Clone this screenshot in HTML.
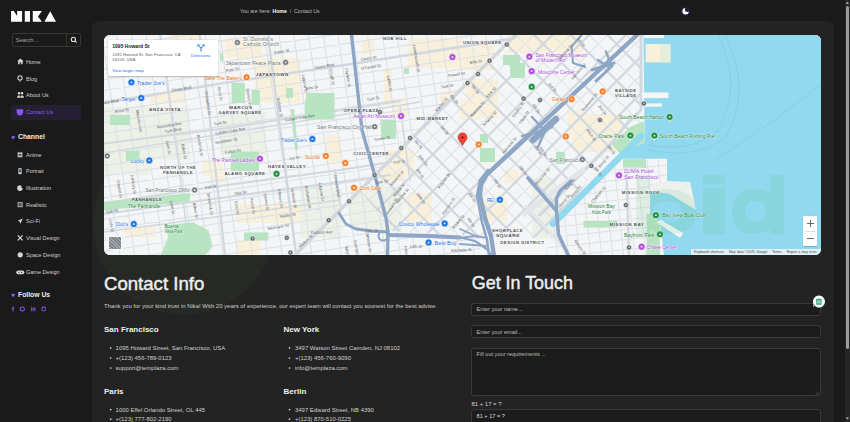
<!DOCTYPE html>
<html><head><meta charset="utf-8">
<style>
html,body{margin:0;padding:0;width:850px;height:422px;overflow:hidden;background:#1a1a1a;font-family:"Liberation Sans",sans-serif;}
.abs{position:absolute;}
#panel{position:absolute;left:92px;top:21px;width:742px;height:420px;background:#232323;border-radius:7px;}
#map{position:absolute;left:104px;top:35px;width:717px;height:220px;border-radius:6px;overflow:hidden;background:#f1f3f4;}
.nav{position:absolute;left:26px;font-size:5.5px;color:#cfcfcf;line-height:8px;}
.navi{position:absolute;left:17px;}
.h{position:absolute;color:#eee;font-weight:bold;}
.big{-webkit-text-stroke:0.45px #eee;}
.t{position:absolute;color:#cfcfcf;font-size:5.95px;white-space:nowrap;line-height:8px;}
.inp{position:absolute;left:471px;width:350px;background:#1c1c1c;border:0.6px solid #3a3a3a;border-radius:3px;box-sizing:border-box;}
.ph{position:absolute;left:4.6px;color:#bdbdbd;font-size:5.6px;white-space:nowrap;}
#sb{position:absolute;left:844.8px;top:0;width:5.2px;height:422px;background:#262626;}
</style></head><body>

<!-- logo -->
<svg class="abs" style="left:0;top:0" width="60" height="26" viewBox="0 0 60 26">
<path fill="#fff" d="M11.06 11.06H13.81L17.17 15.95V11.06H22.07V21.76H11.06Z M24.8 11.06H30V21.76H24.8Z M32.77 11.06H41.94L37.97 16.56L41.94 21.76H32.77Z M44.4 21.76L50.2 11.36L56 21.76Z"/>
</svg>

<!-- search -->
<div class="abs" style="left:11.5px;top:33.2px;width:69px;height:13.6px;border:0.7px solid #38382f;border-radius:2.5px;box-sizing:border-box;"></div>
<div class="abs" style="left:66.4px;top:33.5px;width:0.7px;height:13px;background:#38382f;"></div>
<div class="abs" style="left:15.8px;top:36.6px;font-size:5.6px;color:#a5a5a5;letter-spacing:-0.05px;">Search ...</div>
<svg class="abs" style="left:70px;top:36px" width="8" height="8" viewBox="0 0 8 8"><circle cx="3.4" cy="3.4" r="2.1" stroke="#ddd" stroke-width="1.1" fill="none"/><path d="M4.9 4.9L6.6 6.6" stroke="#ddd" stroke-width="1.2"/></svg>


<!-- nav -->
<div class="abs" style="left:11px;top:105px;width:70px;height:14.7px;background:#251f33;border-radius:3px;"></div>
<div class="nav" style="top:57.5px">Home</div>
<div class="nav" style="top:74.5px">Blog</div>
<div class="nav" style="top:91px">About Us</div>
<div class="nav" style="top:108px;color:#8b5cf6">Contact Us</div>

<div class="h" style="left:18px;top:133.4px;font-size:6.8px;">Channel</div>
<div class="nav" style="top:150.5px">Anime</div>
<div class="nav" style="top:167px">Portrait</div>
<div class="nav" style="top:184px">Illustration</div>
<div class="nav" style="top:200.5px">Realistic</div>
<div class="nav" style="top:217px">Sci-Fi</div>
<div class="nav" style="top:234px">Visual Design</div>
<div class="nav" style="top:250.5px">Space Design</div>
<div class="nav" style="top:268px">Game Design</div>
<div class="h" style="left:18px;top:291.1px;font-size:6.8px;">Follow Us</div>


<svg class="abs" style="left:0;top:0" width="90" height="330" viewBox="0 0 90 330">
<g fill="#d6d6d6">
<path d="M20.4 58.4L17.2 61.3H18.1V64.2H19.7V62.4H21.1V64.2H22.7V61.3H23.6Z"/>
<path d="M20 75.3A2.6 2.6 0 1 0 20 80.5A2.6 2.6 0 1 0 20 75.3ZM20 76.3A1.6 1.6 0 1 1 20 79.5A1.6 1.6 0 1 1 20 76.3ZM19.5 80.3H20.5V81.8H19.5Z"/>
<path d="M19 92A1.3 1.3 0 1 0 19 94.6A1.3 1.3 0 1 0 19 92ZM22 92A1.3 1.3 0 1 0 22 94.6A1.3 1.3 0 1 0 22 92ZM17 97.8Q17.2 95.2 19 95.2Q20.5 95.3 20.5 97.8ZM20.5 97.8Q20.6 95.3 22 95.2Q23.9 95.2 24 97.8Z"/>
<path d="M17.6 152.4H22.4V157.2H17.6ZM18.4 151.6L19.2 152.4H18.4ZM21.6 151.6L20.8 152.4H21.6Z" opacity="0.9"/>
<path d="M18.4 168.2H21.6V174.2H18.4Z"/><rect x="19.1" y="169.2" width="1.8" height="3.2" fill="#555"/>
<path d="M20 185.2A2.9 2.9 0 1 0 22.9 188.6Q21.5 188.3 21.2 187.3Q22.6 186.4 20 185.2Z"/>
<path d="M17.6 202.2H22.6V207.2H17.6Z" opacity="0.9"/>
<path d="M22.8 218.4L17.6 220.8L19.6 221.6L20.4 223.8Z"/>
<path d="M17.8 235.4L22.6 240.4M22.6 235.4L17.8 240.4" stroke="#d6d6d6" stroke-width="1.3"/>
<path d="M20.2 252.2A2.6 2.6 0 1 0 20.2 257.4A2.6 2.6 0 1 0 20.2 252.2Z"/>
<path d="M18.2 270.4H22.4A1.9 1.9 0 0 1 22.4 274.2H18.2A1.9 1.9 0 0 1 18.2 270.4Z"/>
</g>
<g fill="#262626"><circle cx="19" cy="272.3" r="0.6"/><circle cx="21.6" cy="272.3" r="0.6"/><rect x="18.6" y="154" width="2.8" height="1.6" fill="#444"/><rect x="18.4" y="203" width="3.4" height="3.4" fill="#555"/></g>
<g fill="#8b5cf6">
<path d="M16.6 109.2H23.2V113.2H22.2V115.2H17.6V113.2H16.6Z" opacity="0.95"/>
<path d="M11.6 135.8L15.3 136.6L13.4 139.2L11.8 138.2Z"/>
<path d="M11.6 293.6L15.3 294.3L13.4 296.9L11.8 296Z"/>
<path d="M12.3 306.4H14.2V307.3H13.4V308.2H14.1V309.1H13.4V311.6H12.5V309.1H11.9V308.2H12.5V307.4Q12.5 306.4 13.6 306.4Z"/>
<path d="M22.3 306.4A2.5 2.5 0 1 0 22.3 311.4A2.5 2.5 0 1 0 22.3 306.4ZM22.3 307.3A1.6 1.6 0 1 1 22.3 310.5A1.6 1.6 0 1 1 22.3 307.3Z"/>
<path d="M31.2 307.6H32.1V311.2H31.2ZM31.2 306.4H32.1V307.1H31.2ZM32.7 307.6H33.5V308.1Q34 307.5 34.6 307.5Q35.5 307.6 35.5 308.6V311.2H34.6V308.9Q34.6 308.3 34.1 308.3Q33.6 308.4 33.6 309V311.2H32.7Z"/>
<path d="M43.75 306.6A2.4 2.4 0 1 0 43.75 311.4A2.4 2.4 0 1 0 43.75 306.6ZM43.75 307.4A1.6 1.6 0 1 1 43.75 310.6A1.6 1.6 0 1 1 43.75 307.4Z"/>
</g>
</svg>
<!-- header -->
<div class="abs" style="left:240px;top:8px;font-size:5.2px;color:#bbb;white-space:nowrap;">You are here: <b style="color:#fff">Home</b> &nbsp;/&nbsp; Contact Us</div>
<svg class="abs" style="left:678px;top:4px" width="16" height="16" viewBox="0 0 16 16"><defs><mask id="mm"><rect width="16" height="16" fill="#fff"/><circle cx="9.4" cy="5.5" r="2.5" fill="#000"/></mask></defs><circle cx="7.5" cy="7" r="5.3" fill="#221b33"/><circle cx="7.6" cy="7.3" r="3.2" fill="#fff" mask="url(#mm)"/></svg>

<div id="panel"></div>
<div class="abs" style="left:93px;top:133px;width:182px;height:182px;border-radius:50%;background:rgba(120,150,60,0.05);"></div>
<div id="map"><svg id="mapsvg" width="717" height="220" viewBox="104 35 717 220" style="position:absolute;left:0;top:0" font-family="Liberation Sans, sans-serif"><defs><clipPath id="cw"><polygon points="104.0,35.0 515.0,35.0 360.0,190.0 392.0,231.0 480.0,236.0 480.0,255.0 104.0,255.0"/></clipPath><clipPath id="cs"><polygon points="515.0,35.0 641.0,35.0 641.0,125.0 612.0,150.0 551.0,229.0 545.0,238.0 480.0,236.0 392.0,231.0 360.0,190.0"/></clipPath><clipPath id="cm"><polygon points="553.0,229.0 622.0,160.0 667.0,160.0 667.0,182.0 650.0,186.0 650.0,214.0 660.0,222.0 664.0,255.0 545.0,255.0"/></clipPath></defs><rect x="104.0" y="35.0" width="717.0" height="220.0" rx="0" fill="#f4f5f6" /><rect x="104.0" y="107.0" width="86.0" height="53.0" rx="0" fill="#ecf0e6" /><rect x="220.0" y="112.0" width="46.0" height="43.0" rx="0" fill="#ecf0e6" /><rect x="300.0" y="188.0" width="42.0" height="50.0" rx="0" fill="#ecf0e6" /><rect x="350.0" y="186.0" width="52.0" height="44.0" rx="0" fill="#ecf0e6" /><rect x="532.0" y="178.0" width="24.0" height="60.0" rx="0" fill="#ecf0e6" /><rect x="104.0" y="160.0" width="46.0" height="15.0" rx="0" fill="#ecf0e6" /><rect x="225.0" y="38.0" width="37.0" height="20.0" rx="0" fill="#f9f0dc" /><rect x="255.0" y="58.0" width="45.0" height="45.0" rx="0" fill="#f9f0dc" /><rect x="408.0" y="38.0" width="54.0" height="30.0" rx="0" fill="#f9f0dc" /><rect x="440.0" y="92.0" width="12.0" height="10.0" rx="0" fill="#f9f0dc" /><rect x="460.0" y="45.0" width="34.0" height="25.0" rx="0" fill="#f9f0dc" /><rect x="466.0" y="79.0" width="32.0" height="39.0" rx="0" fill="#f9f0dc" /><rect x="508.0" y="35.0" width="74.0" height="18.0" rx="0" fill="#f9f0dc" /><rect x="362.0" y="40.0" width="12.0" height="14.0" rx="0" fill="#f9f0dc" /><rect x="384.0" y="68.0" width="8.0" height="37.0" rx="0" fill="#f9f0dc" /><rect x="392.0" y="100.0" width="16.0" height="17.0" rx="0" fill="#f9f0dc" /><rect x="386.0" y="150.0" width="28.0" height="26.0" rx="0" fill="#f9f0dc" /><rect x="460.0" y="100.0" width="20.0" height="20.0" rx="0" fill="#f9f0dc" /><rect x="568.0" y="110.0" width="14.0" height="27.0" rx="0" fill="#f9f0dc" /><rect x="572.0" y="114.0" width="50.0" height="38.0" rx="0" fill="#f9f0dc" /><rect x="203.0" y="160.0" width="19.0" height="16.0" rx="0" fill="#f9f0dc" /><rect x="326.0" y="135.0" width="15.0" height="28.0" rx="0" fill="#f9f0dc" /><rect x="210.0" y="170.0" width="15.0" height="13.0" rx="0" fill="#f9f0dc" /><rect x="124.0" y="226.0" width="31.0" height="11.0" rx="0" fill="#f9f0dc" /><rect x="236.0" y="204.0" width="65.0" height="19.0" rx="0" fill="#f9f0dc" /><rect x="236.0" y="240.0" width="24.0" height="15.0" rx="0" fill="#f9f0dc" /><rect x="408.0" y="193.0" width="24.0" height="29.0" rx="0" fill="#f9f0dc" /><rect x="384.0" y="164.0" width="20.0" height="18.0" rx="0" fill="#f9f0dc" /><rect x="372.0" y="170.0" width="33.0" height="9.0" rx="0" fill="#f9f0dc" /><rect x="484.0" y="198.0" width="23.0" height="23.0" rx="0" fill="#f9f0dc" /><rect x="504.0" y="170.0" width="15.0" height="13.0" rx="0" fill="#f9f0dc" /><rect x="150.0" y="93.0" width="35.0" height="10.0" rx="0" fill="#f9f0dc" /><rect x="170.0" y="35.0" width="30.0" height="10.0" rx="0" fill="#f9f0dc" /><g clip-path="url(#cw)"><path transform="rotate(-8.5 300 100)" d="M-120 -320.0H720M-120 -309.4H720M-120 -298.8H720M-120 -288.2H720M-120 -277.6H720M-120 -267.0H720M-120 -256.4H720M-120 -245.8H720M-120 -235.2H720M-120 -224.6H720M-120 -214.0H720M-120 -203.4H720M-120 -192.8H720M-120 -182.2H720M-120 -171.6H720M-120 -161.0H720M-120 -150.4H720M-120 -139.8H720M-120 -129.2H720M-120 -118.6H720M-120 -108.0H720M-120 -97.4H720M-120 -86.8H720M-120 -76.2H720M-120 -65.6H720M-120 -55.0H720M-120 -44.4H720M-120 -33.8H720M-120 -23.2H720M-120 -12.6H720M-120 -2.0H720M-120 8.6H720M-120 19.2H720M-120 29.8H720M-120 40.4H720M-120 51.0H720M-120 61.6H720M-120 72.2H720M-120 82.8H720M-120 93.4H720M-120 104.0H720M-120 114.6H720M-120 125.2H720M-120 135.8H720M-120 146.4H720M-120 157.0H720M-120 167.6H720M-120 178.2H720M-120 188.8H720M-120 199.4H720M-120 210.0H720M-120 220.6H720M-120 231.2H720M-120 241.8H720M-120 252.4H720M-120 263.0H720M-120 273.6H720M-120 284.2H720M-120 294.8H720M-120 305.4H720M-120 316.0H720M-120 326.6H720M-120 337.2H720M-120 347.8H720M-120 358.4H720M-120 369.0H720M-120 379.6H720M-120 390.2H720M-120 400.8H720M-120 411.4H720M-120 422.0H720M-120 432.6H720M-120 443.2H720M-120 453.8H720M-120 464.4H720M-120 475.0H720M-120 485.6H720M-120 496.2H720M-120 506.8H720M-120 517.4H720M-120.0 -320V520M-105.4 -320V520M-90.8 -320V520M-76.2 -320V520M-61.6 -320V520M-47.0 -320V520M-32.4 -320V520M-17.8 -320V520M-3.2 -320V520M11.4 -320V520M26.0 -320V520M40.6 -320V520M55.2 -320V520M69.8 -320V520M84.4 -320V520M99.0 -320V520M113.6 -320V520M128.2 -320V520M142.8 -320V520M157.4 -320V520M172.0 -320V520M186.6 -320V520M201.2 -320V520M215.8 -320V520M230.4 -320V520M245.0 -320V520M259.6 -320V520M274.2 -320V520M288.8 -320V520M303.4 -320V520M318.0 -320V520M332.6 -320V520M347.2 -320V520M361.8 -320V520M376.4 -320V520M391.0 -320V520M405.6 -320V520M420.2 -320V520M434.8 -320V520M449.4 -320V520M464.0 -320V520M478.6 -320V520M493.2 -320V520M507.8 -320V520M522.4 -320V520M537.0 -320V520M551.6 -320V520M566.2 -320V520M580.8 -320V520M595.4 -320V520M610.0 -320V520M624.6 -320V520M639.2 -320V520M653.8 -320V520M668.4 -320V520M683.0 -320V520M697.6 -320V520M712.2 -320V520" stroke="#dce1e6" stroke-width="1.1" fill="none"/></g><g clip-path="url(#cs)"><path transform="rotate(-45 467.5 83)" d="M47.5 -333.0H887.5M47.5 -320.0H887.5M47.5 -307.0H887.5M47.5 -294.0H887.5M47.5 -281.0H887.5M47.5 -268.0H887.5M47.5 -255.0H887.5M47.5 -242.0H887.5M47.5 -229.0H887.5M47.5 -216.0H887.5M47.5 -203.0H887.5M47.5 -190.0H887.5M47.5 -177.0H887.5M47.5 -164.0H887.5M47.5 -151.0H887.5M47.5 -138.0H887.5M47.5 -125.0H887.5M47.5 -112.0H887.5M47.5 -99.0H887.5M47.5 -86.0H887.5M47.5 -73.0H887.5M47.5 -60.0H887.5M47.5 -47.0H887.5M47.5 -34.0H887.5M47.5 -21.0H887.5M47.5 -8.0H887.5M47.5 5.0H887.5M47.5 18.0H887.5M47.5 31.0H887.5M47.5 44.0H887.5M47.5 57.0H887.5M47.5 70.0H887.5M47.5 83.0H887.5M47.5 96.0H887.5M47.5 109.0H887.5M47.5 122.0H887.5M47.5 135.0H887.5M47.5 148.0H887.5M47.5 161.0H887.5M47.5 174.0H887.5M47.5 187.0H887.5M47.5 200.0H887.5M47.5 213.0H887.5M47.5 226.0H887.5M47.5 239.0H887.5M47.5 252.0H887.5M47.5 265.0H887.5M47.5 278.0H887.5M47.5 291.0H887.5M47.5 304.0H887.5M47.5 317.0H887.5M47.5 330.0H887.5M47.5 343.0H887.5M47.5 356.0H887.5M47.5 369.0H887.5M47.5 382.0H887.5M47.5 395.0H887.5M47.5 408.0H887.5M47.5 421.0H887.5M47.5 434.0H887.5M47.5 447.0H887.5M47.5 460.0H887.5M47.5 473.0H887.5M47.5 486.0H887.5M47.5 499.0H887.5M54.5 -337V503M67.5 -337V503M80.5 -337V503M93.5 -337V503M106.5 -337V503M119.5 -337V503M132.5 -337V503M145.5 -337V503M158.5 -337V503M171.5 -337V503M184.5 -337V503M197.5 -337V503M210.5 -337V503M223.5 -337V503M236.5 -337V503M249.5 -337V503M262.5 -337V503M275.5 -337V503M288.5 -337V503M301.5 -337V503M314.5 -337V503M327.5 -337V503M340.5 -337V503M353.5 -337V503M366.5 -337V503M379.5 -337V503M392.5 -337V503M405.5 -337V503M418.5 -337V503M431.5 -337V503M444.5 -337V503M457.5 -337V503M470.5 -337V503M483.5 -337V503M496.5 -337V503M509.5 -337V503M522.5 -337V503M535.5 -337V503M548.5 -337V503M561.5 -337V503M574.5 -337V503M587.5 -337V503M600.5 -337V503M613.5 -337V503M626.5 -337V503M639.5 -337V503M652.5 -337V503M665.5 -337V503M678.5 -337V503M691.5 -337V503M704.5 -337V503M717.5 -337V503M730.5 -337V503M743.5 -337V503M756.5 -337V503M769.5 -337V503M782.5 -337V503M795.5 -337V503M808.5 -337V503M821.5 -337V503M834.5 -337V503M847.5 -337V503M860.5 -337V503M873.5 -337V503M886.5 -337V503" stroke="#dce1e6" stroke-width="1.0" fill="none"/></g><g clip-path="url(#cs)"><path transform="rotate(-45 467.5 83)" d="M47.5 -333.0H887.5M47.5 -307.0H887.5M47.5 -281.0H887.5M47.5 -255.0H887.5M47.5 -229.0H887.5M47.5 -203.0H887.5M47.5 -177.0H887.5M47.5 -151.0H887.5M47.5 -125.0H887.5M47.5 -99.0H887.5M47.5 -73.0H887.5M47.5 -47.0H887.5M47.5 -21.0H887.5M47.5 5.0H887.5M47.5 31.0H887.5M47.5 57.0H887.5M47.5 83.0H887.5M47.5 109.0H887.5M47.5 135.0H887.5M47.5 161.0H887.5M47.5 187.0H887.5M47.5 213.0H887.5M47.5 239.0H887.5M47.5 265.0H887.5M47.5 291.0H887.5M47.5 317.0H887.5M47.5 343.0H887.5M47.5 369.0H887.5M47.5 395.0H887.5M47.5 421.0H887.5M47.5 447.0H887.5M47.5 473.0H887.5M47.5 499.0H887.5M54.5 -337V503M80.5 -337V503M106.5 -337V503M132.5 -337V503M158.5 -337V503M184.5 -337V503M210.5 -337V503M236.5 -337V503M262.5 -337V503M288.5 -337V503M314.5 -337V503M340.5 -337V503M366.5 -337V503M392.5 -337V503M418.5 -337V503M444.5 -337V503M470.5 -337V503M496.5 -337V503M522.5 -337V503M548.5 -337V503M574.5 -337V503M600.5 -337V503M626.5 -337V503M652.5 -337V503M678.5 -337V503M704.5 -337V503M730.5 -337V503M756.5 -337V503M782.5 -337V503M808.5 -337V503M834.5 -337V503M860.5 -337V503M886.5 -337V503" stroke="#d2d8df" stroke-width="2.2" fill="none"/></g><g clip-path="url(#cm)"><path transform="rotate(-6 620 200)" d="M200 -220.0H1040M200 -210.0H1040M200 -200.0H1040M200 -190.0H1040M200 -180.0H1040M200 -170.0H1040M200 -160.0H1040M200 -150.0H1040M200 -140.0H1040M200 -130.0H1040M200 -120.0H1040M200 -110.0H1040M200 -100.0H1040M200 -90.0H1040M200 -80.0H1040M200 -70.0H1040M200 -60.0H1040M200 -50.0H1040M200 -40.0H1040M200 -30.0H1040M200 -20.0H1040M200 -10.0H1040M200 0.0H1040M200 10.0H1040M200 20.0H1040M200 30.0H1040M200 40.0H1040M200 50.0H1040M200 60.0H1040M200 70.0H1040M200 80.0H1040M200 90.0H1040M200 100.0H1040M200 110.0H1040M200 120.0H1040M200 130.0H1040M200 140.0H1040M200 150.0H1040M200 160.0H1040M200 170.0H1040M200 180.0H1040M200 190.0H1040M200 200.0H1040M200 210.0H1040M200 220.0H1040M200 230.0H1040M200 240.0H1040M200 250.0H1040M200 260.0H1040M200 270.0H1040M200 280.0H1040M200 290.0H1040M200 300.0H1040M200 310.0H1040M200 320.0H1040M200 330.0H1040M200 340.0H1040M200 350.0H1040M200 360.0H1040M200 370.0H1040M200 380.0H1040M200 390.0H1040M200 400.0H1040M200 410.0H1040M200 420.0H1040M200 430.0H1040M200 440.0H1040M200 450.0H1040M200 460.0H1040M200 470.0H1040M200 480.0H1040M200 490.0H1040M200 500.0H1040M200 510.0H1040M200 520.0H1040M200 530.0H1040M200 540.0H1040M200 550.0H1040M200 560.0H1040M200 570.0H1040M200 580.0H1040M200 590.0H1040M200 600.0H1040M200 610.0H1040M200 620.0H1040M200.0 -220V620M211.0 -220V620M222.0 -220V620M233.0 -220V620M244.0 -220V620M255.0 -220V620M266.0 -220V620M277.0 -220V620M288.0 -220V620M299.0 -220V620M310.0 -220V620M321.0 -220V620M332.0 -220V620M343.0 -220V620M354.0 -220V620M365.0 -220V620M376.0 -220V620M387.0 -220V620M398.0 -220V620M409.0 -220V620M420.0 -220V620M431.0 -220V620M442.0 -220V620M453.0 -220V620M464.0 -220V620M475.0 -220V620M486.0 -220V620M497.0 -220V620M508.0 -220V620M519.0 -220V620M530.0 -220V620M541.0 -220V620M552.0 -220V620M563.0 -220V620M574.0 -220V620M585.0 -220V620M596.0 -220V620M607.0 -220V620M618.0 -220V620M629.0 -220V620M640.0 -220V620M651.0 -220V620M662.0 -220V620M673.0 -220V620M684.0 -220V620M695.0 -220V620M706.0 -220V620M717.0 -220V620M728.0 -220V620M739.0 -220V620M750.0 -220V620M761.0 -220V620M772.0 -220V620M783.0 -220V620M794.0 -220V620M805.0 -220V620M816.0 -220V620M827.0 -220V620M838.0 -220V620M849.0 -220V620M860.0 -220V620M871.0 -220V620M882.0 -220V620M893.0 -220V620M904.0 -220V620M915.0 -220V620M926.0 -220V620M937.0 -220V620M948.0 -220V620M959.0 -220V620M970.0 -220V620M981.0 -220V620M992.0 -220V620M1003.0 -220V620M1014.0 -220V620M1025.0 -220V620M1036.0 -220V620" stroke="#dce1e6" stroke-width="1.0" fill="none"/></g><path d="M104.0 103.0 L224.0 83.0 L345.0 65.0 L515.0 38.0" fill="none" stroke="#d2d8df" stroke-width="2.6" stroke-linejoin="round" stroke-linecap="round" /><path d="M104.0 143.5 L224.0 128.4 L400.0 101.0" fill="none" stroke="#d2d8df" stroke-width="2.0" stroke-linejoin="round" stroke-linecap="round" /><path d="M104.0 153.0 L303.0 121.0 L420.0 102.0" fill="none" stroke="#d2d8df" stroke-width="1.6" stroke-linejoin="round" stroke-linecap="round" /><path d="M104.0 203.0 L220.0 186.0 L340.0 170.0 L392.0 162.0" fill="none" stroke="#d2d8df" stroke-width="2.2" stroke-linejoin="round" stroke-linecap="round" /><path d="M104.0 214.0 L220.0 198.0 L340.0 182.0 L390.0 175.0" fill="none" stroke="#d2d8df" stroke-width="2.2" stroke-linejoin="round" stroke-linecap="round" /><path d="M200.0 35.0 L211.0 130.0 L225.0 255.0" fill="none" stroke="#d2d8df" stroke-width="2.2" stroke-linejoin="round" stroke-linecap="round" /><path d="M268.0 35.0 L286.0 175.0 L296.0 255.0" fill="none" stroke="#d2d8df" stroke-width="2.4" stroke-linejoin="round" stroke-linecap="round" /><path d="M335.0 170.0 L340.0 205.0" fill="none" stroke="#d2d8df" stroke-width="2.0" stroke-linejoin="round" stroke-linecap="round" /><path d="M641.0 35.0 L641.0 110.0 L629.0 121.0 L611.0 144.0 L593.0 162.0 L575.0 180.0 L540.0 215.0" fill="none" stroke="#d2d8df" stroke-width="3.0" stroke-linejoin="round" stroke-linecap="round" /><path d="M626.0 160.0 L629.0 255.0" fill="none" stroke="#d2d8df" stroke-width="2.4" stroke-linejoin="round" stroke-linecap="round" /><path d="M104.0 232.0 L230.0 215.0 L340.0 200.0" fill="none" stroke="#d2d8df" stroke-width="1.6" stroke-linejoin="round" stroke-linecap="round" /><path d="M160.0 35.0 L178.0 160.0 L190.0 255.0" fill="none" stroke="#d2d8df" stroke-width="1.6" stroke-linejoin="round" stroke-linecap="round" /><path d="M400.0 106.0 L410.0 180.0" fill="none" stroke="#d2d8df" stroke-width="1.6" stroke-linejoin="round" stroke-linecap="round" /><path d="M515.5 35.0 L295.0 255.0" fill="none" stroke="#d3d8de" stroke-width="3.4" stroke-linejoin="round" stroke-linecap="round" /><path d="M524.0 214.0 L583.0 170.0" fill="none" stroke="#e2e5e9" stroke-width="5" stroke-linejoin="round" stroke-linecap="round" /><path d="M526.0 206.0 L567.0 251.0" fill="none" stroke="#e2e5e9" stroke-width="3" stroke-linejoin="round" stroke-linecap="round" /><rect x="126.0" y="150.7" width="13.5" height="10.6" rx="0" fill="#b9e4c2" /><rect x="230.7" y="151.5" width="28.3" height="19.5" rx="0" fill="#b9e4c2" /><rect x="305.0" y="100.0" width="29.0" height="19.6" rx="0" fill="#b9e4c2" /><rect x="231.6" y="83.0" width="13.3" height="20.0" rx="0" fill="#b9e4c2" /><rect x="251.5" y="90.0" width="8.3" height="15.0" rx="0" fill="#b9e4c2" /><rect x="286.0" y="88.0" width="7.0" height="10.0" rx="0" fill="#b9e4c2" /><rect x="306.0" y="93.0" width="28.5" height="12.0" rx="0" fill="#b9e4c2" /><rect x="381.0" y="119.6" width="15.0" height="19.4" rx="0" fill="#b9e4c2" /><rect x="503.0" y="55.0" width="17.0" height="10.0" rx="0" fill="#b9e4c2" /><rect x="510.0" y="63.0" width="15.0" height="15.0" rx="0" fill="#b9e4c2" /><rect x="480.0" y="134.0" width="8.0" height="9.0" rx="0" fill="#b9e4c2" /><rect x="480.0" y="148.0" width="15.0" height="14.0" rx="0" fill="#b9e4c2" /><rect x="556.0" y="152.0" width="9.0" height="12.0" rx="0" fill="#b9e4c2" /><rect x="583.5" y="220.8" width="33.8" height="6.8" rx="0" fill="#b9e4c2" /><rect x="646.6" y="214.0" width="13.4" height="41.0" rx="0" fill="#b9e4c2" /><rect x="244.0" y="232.4" width="24.3" height="8.1" rx="0" fill="#b9e4c2" /><rect x="220.0" y="53.0" width="3.0" height="8.0" rx="0" fill="#b9e4c2" /><rect x="404.0" y="68.0" width="5.0" height="6.0" rx="0" fill="#b9e4c2" /><rect x="110.0" y="115.0" width="20.0" height="10.0" rx="0" fill="#b9e4c2" /><polygon points="104.0,202.0 190.0,193.0 190.0,201.5 104.0,210.5" fill="#b9e4c2" /><polygon points="164.4,225.4 192.6,222.3 208.7,230.4 212.7,246.5 204.7,256.0 160.4,256.0 168.4,236.4" fill="#b9e4c2" /><polygon points="291.0,109.0 294.0,109.0 298.0,150.0 295.0,150.0" fill="#b9e4c2" /><polygon points="611.8,144.4 630.4,126.7 643.8,121.3 644.7,142.7 619.8,153.3" fill="#b9e4c2" /><rect x="623.0" y="158.7" width="23.0" height="8.8" rx="0" fill="#b9e4c2" /><polygon points="643.5,35.0 821.0,35.0 821.0,255.0 664.0,255.0 660.0,222.0 650.0,214.0 650.0,185.0 667.0,182.0 667.0,158.7 623.0,158.7 619.8,153.3 644.7,142.7" fill="#90d9ee" /><path d="M641.0 136.0 L553.0 224.0" fill="none" stroke="#90d9ee" stroke-width="6.4" stroke-linejoin="round" stroke-linecap="round" stroke-linecap="butt"/><path d="M725 35 Q752 90 726 136 Q700 160 648 150" fill="none" stroke="#6fbcd6" stroke-width="0.5" stroke-linejoin="round" stroke-linecap="round" stroke-dasharray="1 1" opacity="0.7"/><path d="M718 35 Q744 90 716 133 Q690 152 648 145" fill="none" stroke="#6fbcd6" stroke-width="0.5" stroke-linejoin="round" stroke-linecap="round" stroke-dasharray="1 1" opacity="0.7"/><path d="M821 84 Q770 125 715 160" fill="none" stroke="#6fbcd6" stroke-width="0.5" stroke-linejoin="round" stroke-linecap="round" stroke-dasharray="1 1" opacity="0.7"/><rect x="644.0" y="35.0" width="20.0" height="3.0" rx="0" fill="#f4f5f6" /><rect x="645.6" y="44.0" width="24.8" height="18.4" rx="0" fill="#f9f0dc" /><rect x="660.0" y="44.0" width="10.4" height="18.4" rx="0" fill="#e3efdc" /><rect x="641.7" y="92.4" width="26.7" height="5.7" rx="0" fill="#f4f5f6" /><rect x="643.0" y="103.4" width="18.8" height="3.3" rx="0" fill="#f4f5f6" /><polygon points="650.0,185.0 667.0,181.0 690.0,182.0 696.0,210.0 670.0,194.0 650.0,191.0" fill="#eef0ee" /><polygon points="656.0,222.0 661.0,220.0 683.0,233.0 680.0,238.0" fill="#f4f5f6" /><path d="M351.5 35.0 L362.0 130.0 L374.7 175.0 L386.0 218.0 L388.0 232.0 L387.5 256.0" fill="none" stroke="#8ea6c6" stroke-width="3.4" stroke-linejoin="round" stroke-linecap="round" /><path d="M637.0 35.0 L561.6 105.0 L486.7 174.7 L481.0 185.0 L480.0 196.0 L485.0 218.0 L491.0 236.0 L494.0 256.0" fill="none" stroke="#8ea6c6" stroke-width="4.4" stroke-linejoin="round" stroke-linecap="round" /><path d="M488.0 170.0 L480.0 180.0 L477.0 196.0 L482.0 222.0 L487.0 240.0 L489.0 256.0" fill="none" stroke="#8ea6c6" stroke-width="2.6" stroke-linejoin="round" stroke-linecap="round" /><path d="M339.0 213.0 L346.0 224.0 L356.0 229.0 L372.0 231.0 L388.0 232.0" fill="none" stroke="#8ea6c6" stroke-width="2.8" stroke-linejoin="round" stroke-linecap="round" /><path d="M388.0 235.0 L430.0 236.0 L460.0 237.5" fill="none" stroke="#8ea6c6" stroke-width="3.8" stroke-linejoin="round" stroke-linecap="round" /><path d="M458.0 237.0 L475.0 241.0 L488.0 250.0 L492.0 256.0" fill="none" stroke="#8ea6c6" stroke-width="2.2" stroke-linejoin="round" stroke-linecap="round" /><path d="M458.0 238.0 L476.0 236.0 L487.0 238.0" fill="none" stroke="#8ea6c6" stroke-width="2.2" stroke-linejoin="round" stroke-linecap="round" /><path d="M460.0 229.0 L478.0 237.0" fill="none" stroke="#8ea6c6" stroke-width="1.8" stroke-linejoin="round" stroke-linecap="round" /><path d="M460.0 244.0 L486.0 246.0" fill="none" stroke="#8ea6c6" stroke-width="1.8" stroke-linejoin="round" stroke-linecap="round" /><path d="M528.0 178.0 L550.5 204.0 L556.5 211.0 L558.5 234.5 L568.6 256.0" fill="none" stroke="#8ea6c6" stroke-width="3.6" stroke-linejoin="round" stroke-linecap="round" /><path d="M571.0 181.0 L560.0 191.0 L556.5 198.0 L556.5 211.0" fill="none" stroke="#8ea6c6" stroke-width="3.4" stroke-linejoin="round" stroke-linecap="round" /><path d="M522.0 136.0 L538.0 132.0 L552.0 127.0" fill="none" stroke="#8ea6c6" stroke-width="2.4" stroke-linejoin="round" stroke-linecap="round" /><path d="M532.0 117.0 L542.0 128.0" fill="none" stroke="#8ea6c6" stroke-width="2.4" stroke-linejoin="round" stroke-linecap="round" /><path d="M545.0 131.0 L538.0 147.0" fill="none" stroke="#8ea6c6" stroke-width="2.4" stroke-linejoin="round" stroke-linecap="round" /><path d="M581.5 35.0 L571.5 46.6 L573.0 63.0 L585.0 67.0" fill="none" stroke="#8ea6c6" stroke-width="2.2" stroke-linejoin="round" stroke-linecap="round" /><path d="M606.0 51.6 L611.0 65.0" fill="none" stroke="#8ea6c6" stroke-width="2.4" stroke-linejoin="round" stroke-linecap="round" /><path d="M598.0 60.0 L609.7 68.0" fill="none" stroke="#8ea6c6" stroke-width="2.4" stroke-linejoin="round" stroke-linecap="round" /><path d="M592.0 70.0 L614.0 63.0" fill="none" stroke="#8ea6c6" stroke-width="3.0" stroke-linejoin="round" stroke-linecap="round" /><path d="M596.0 81.0 L612.0 66.0" fill="none" stroke="#8ea6c6" stroke-width="3.0" stroke-linejoin="round" stroke-linecap="round" /><path d="M533.0 140.0 L556.0 119.0" fill="none" stroke="#8ea6c6" stroke-width="6.5" stroke-linejoin="round" stroke-linecap="round" /><circle cx="383" cy="236" r="4.5" fill="none" stroke="#8ea6c6" stroke-width="2"/><text x="149" y="110.5" font-size="4.1" fill="#4d5257" font-weight="bold" letter-spacing="0.45" text-anchor="start" stroke="#fff" stroke-width="0.6" stroke-opacity="0.8" paint-order="stroke" textLength="32" lengthAdjust="spacingAndGlyphs">ANZA VISTA</text><text x="229" y="108.5" font-size="4.1" fill="#4d5257" font-weight="bold" letter-spacing="0.45" text-anchor="start" stroke="#fff" stroke-width="0.6" stroke-opacity="0.8" paint-order="stroke" textLength="23.5" lengthAdjust="spacingAndGlyphs">MARCUS</text><text x="218.6" y="114" font-size="4.1" fill="#4d5257" font-weight="bold" letter-spacing="0.45" text-anchor="start" stroke="#fff" stroke-width="0.6" stroke-opacity="0.8" paint-order="stroke" textLength="43" lengthAdjust="spacingAndGlyphs">GARVEY SQUARE</text><text x="255.7" y="76" font-size="4.1" fill="#4d5257" font-weight="bold" letter-spacing="0.45" text-anchor="start" stroke="#fff" stroke-width="0.6" stroke-opacity="0.8" paint-order="stroke" textLength="33" lengthAdjust="spacingAndGlyphs">JAPANTOWN</text><text x="383" y="39.6" font-size="4.1" fill="#4d5257" font-weight="bold" letter-spacing="0.45" text-anchor="start" stroke="#fff" stroke-width="0.6" stroke-opacity="0.8" paint-order="stroke" textLength="24" lengthAdjust="spacingAndGlyphs">NOB HILL</text><text x="463" y="44.2" font-size="4.1" fill="#4d5257" font-weight="bold" letter-spacing="0.45" text-anchor="start" stroke="#fff" stroke-width="0.6" stroke-opacity="0.8" paint-order="stroke" textLength="38.5" lengthAdjust="spacingAndGlyphs">UNION SQUARE</text><text x="343.6" y="111.5" font-size="4.1" fill="#4d5257" font-weight="bold" letter-spacing="0.45" text-anchor="start" stroke="#fff" stroke-width="0.6" stroke-opacity="0.8" paint-order="stroke" textLength="35.4" lengthAdjust="spacingAndGlyphs">OPERA PLAZA</text><text x="416.4" y="120.4" font-size="4.1" fill="#4d5257" font-weight="bold" letter-spacing="0.45" text-anchor="start" stroke="#fff" stroke-width="0.6" stroke-opacity="0.8" paint-order="stroke" textLength="32" lengthAdjust="spacingAndGlyphs">MID-MARKET</text><text x="353.3" y="154.5" font-size="4.1" fill="#4d5257" font-weight="bold" letter-spacing="0.45" text-anchor="start" stroke="#fff" stroke-width="0.6" stroke-opacity="0.8" paint-order="stroke" textLength="35.7" lengthAdjust="spacingAndGlyphs">CIVIC CENTER</text><text x="160" y="169" font-size="4.1" fill="#4d5257" font-weight="bold" letter-spacing="0.45" text-anchor="start" stroke="#fff" stroke-width="0.6" stroke-opacity="0.8" paint-order="stroke" textLength="36" lengthAdjust="spacingAndGlyphs">NORTH OF THE</text><text x="163" y="174" font-size="4.1" fill="#4d5257" font-weight="bold" letter-spacing="0.45" text-anchor="start" stroke="#fff" stroke-width="0.6" stroke-opacity="0.8" paint-order="stroke" textLength="30" lengthAdjust="spacingAndGlyphs">PANHANDLE</text><text x="132" y="201" font-size="4.1" fill="#4d5257" font-weight="bold" letter-spacing="0.45" text-anchor="start" stroke="#fff" stroke-width="0.6" stroke-opacity="0.8" paint-order="stroke" textLength="30.4" lengthAdjust="spacingAndGlyphs">PANHANDLE</text><text x="268" y="168.4" font-size="4.1" fill="#4d5257" font-weight="bold" letter-spacing="0.45" text-anchor="start" stroke="#fff" stroke-width="0.6" stroke-opacity="0.8" paint-order="stroke" textLength="38" lengthAdjust="spacingAndGlyphs">HAYES VALLEY</text><text x="224.4" y="174.7" font-size="4.1" fill="#4d5257" font-weight="bold" letter-spacing="0.45" text-anchor="start" stroke="#fff" stroke-width="0.6" stroke-opacity="0.8" paint-order="stroke" textLength="41" lengthAdjust="spacingAndGlyphs">ALAMO SQUARE</text><text x="492" y="231.7" font-size="4.1" fill="#4d5257" font-weight="bold" letter-spacing="0.45" text-anchor="start" stroke="#fff" stroke-width="0.6" stroke-opacity="0.8" paint-order="stroke" textLength="31" lengthAdjust="spacingAndGlyphs">SHOWPLACE</text><text x="496" y="236.5" font-size="4.1" fill="#4d5257" font-weight="bold" letter-spacing="0.45" text-anchor="start" stroke="#fff" stroke-width="0.6" stroke-opacity="0.8" paint-order="stroke" textLength="24" lengthAdjust="spacingAndGlyphs">SQUARE</text><text x="500.3" y="243.6" font-size="4.1" fill="#4d5257" font-weight="bold" letter-spacing="0.45" text-anchor="start" stroke="#fff" stroke-width="0.6" stroke-opacity="0.8" paint-order="stroke" textLength="44.3" lengthAdjust="spacingAndGlyphs">DESIGN DISTRICT</text><text x="615" y="91.5" font-size="4.1" fill="#4d5257" font-weight="bold" letter-spacing="0.45" text-anchor="start" stroke="#fff" stroke-width="0.6" stroke-opacity="0.8" paint-order="stroke" textLength="21.6" lengthAdjust="spacingAndGlyphs">BAYSIDE</text><text x="615" y="96.5" font-size="4.1" fill="#4d5257" font-weight="bold" letter-spacing="0.45" text-anchor="start" stroke="#fff" stroke-width="0.6" stroke-opacity="0.8" paint-order="stroke" textLength="21.6" lengthAdjust="spacingAndGlyphs">VILLAGE</text><text x="621.8" y="194" font-size="4.1" fill="#4d5257" font-weight="bold" letter-spacing="0.45" text-anchor="start" stroke="#fff" stroke-width="0.6" stroke-opacity="0.8" paint-order="stroke" textLength="38.2" lengthAdjust="spacingAndGlyphs">MISSION ROCK</text><text x="609.4" y="226" font-size="4.1" fill="#4d5257" font-weight="bold" letter-spacing="0.45" text-anchor="start" stroke="#fff" stroke-width="0.6" stroke-opacity="0.8" paint-order="stroke" textLength="35" lengthAdjust="spacingAndGlyphs">MISSION BAY</text><text x="243" y="41.2" font-size="4.5" fill="#70757a" font-weight="normal" letter-spacing="0" text-anchor="start" stroke="#fff" stroke-width="0.6" stroke-opacity="0.8" paint-order="stroke" textLength="30" lengthAdjust="spacingAndGlyphs">St. Dominic's</text><text x="243" y="46.4" font-size="4.5" fill="#70757a" font-weight="normal" letter-spacing="0" text-anchor="start" stroke="#fff" stroke-width="0.6" stroke-opacity="0.8" paint-order="stroke" textLength="36" lengthAdjust="spacingAndGlyphs">Catholic Church</text><text x="225.8" y="64.5" font-size="4.5" fill="#70757a" font-weight="normal" letter-spacing="0" text-anchor="start" stroke="#fff" stroke-width="0.6" stroke-opacity="0.8" paint-order="stroke" textLength="54.8" lengthAdjust="spacingAndGlyphs">Japantown Peace Plaza</text><text x="204.7" y="80.2" font-size="4.5" fill="#e8710a" font-weight="normal" letter-spacing="0" text-anchor="start" stroke="#fff" stroke-width="0.6" stroke-opacity="0.8" paint-order="stroke" textLength="37" lengthAdjust="spacingAndGlyphs">Jane The Bakery</text><text x="137" y="84.5" font-size="4.5" fill="#1a73e8" font-weight="normal" letter-spacing="0" text-anchor="start" stroke="#fff" stroke-width="0.6" stroke-opacity="0.8" paint-order="stroke" textLength="27.7" lengthAdjust="spacingAndGlyphs">Trader Joe's</text><text x="121.6" y="100.8" font-size="4.5" fill="#1a73e8" font-weight="normal" letter-spacing="0" text-anchor="start" stroke="#fff" stroke-width="0.6" stroke-opacity="0.8" paint-order="stroke" textLength="13.8" lengthAdjust="spacingAndGlyphs">Target</text><text x="130.7" y="162.8" font-size="4.5" fill="#1a73e8" font-weight="normal" letter-spacing="0" text-anchor="start" stroke="#fff" stroke-width="0.6" stroke-opacity="0.8" paint-order="stroke" textLength="13.3" lengthAdjust="spacingAndGlyphs">Lucky</text><text x="211.7" y="161.5" font-size="4.5" fill="#a94ad6" font-weight="normal" letter-spacing="0" text-anchor="start" stroke="#fff" stroke-width="0.6" stroke-opacity="0.8" paint-order="stroke" textLength="42.8" lengthAdjust="spacingAndGlyphs">The Painted Ladies</text><text x="280.4" y="141.5" font-size="4.5" fill="#1a73e8" font-weight="normal" letter-spacing="0" text-anchor="start" stroke="#fff" stroke-width="0.6" stroke-opacity="0.8" paint-order="stroke" textLength="26.6" lengthAdjust="spacingAndGlyphs">Trader Joe's</text><text x="305" y="158.5" font-size="4.5" fill="#e8710a" font-weight="normal" letter-spacing="0" text-anchor="start" stroke="#fff" stroke-width="0.6" stroke-opacity="0.8" paint-order="stroke" textLength="14.6" lengthAdjust="spacingAndGlyphs">Souvla</text><text x="317" y="128.5" font-size="4.5" fill="#70757a" font-weight="normal" letter-spacing="0" text-anchor="start" stroke="#fff" stroke-width="0.6" stroke-opacity="0.8" paint-order="stroke" textLength="55" lengthAdjust="spacingAndGlyphs">San Francisco City Hall</text><text x="353.3" y="117.9" font-size="4.5" fill="#a94ad6" font-weight="normal" letter-spacing="0" text-anchor="start" stroke="#fff" stroke-width="0.6" stroke-opacity="0.8" paint-order="stroke" textLength="41.7" lengthAdjust="spacingAndGlyphs">Asian Art Museum</text><text x="360" y="190" font-size="4.5" fill="#e8710a" font-weight="normal" letter-spacing="0" text-anchor="start" stroke="#fff" stroke-width="0.6" stroke-opacity="0.8" paint-order="stroke" textLength="21" lengthAdjust="spacingAndGlyphs">Zuni Cafe</text><text x="145.3" y="192.2" font-size="4.5" fill="#70757a" font-weight="normal" letter-spacing="0" text-anchor="start" stroke="#fff" stroke-width="0.6" stroke-opacity="0.8" paint-order="stroke" textLength="44.3" lengthAdjust="spacingAndGlyphs">San Francisco DMV</text><text x="116" y="225.9" font-size="4.5" fill="#1a73e8" font-weight="normal" letter-spacing="0" text-anchor="start" stroke="#fff" stroke-width="0.6" stroke-opacity="0.8" paint-order="stroke" textLength="12.2" lengthAdjust="spacingAndGlyphs">Dot's</text><text x="164.4" y="227.5" font-size="4.5" fill="#188038" font-weight="normal" letter-spacing="0" text-anchor="start" stroke="#fff" stroke-width="0.6" stroke-opacity="0.8" paint-order="stroke" textLength="14" lengthAdjust="spacingAndGlyphs">Buena</text><text x="164.4" y="232.9" font-size="4.5" fill="#188038" font-weight="normal" letter-spacing="0" text-anchor="start" stroke="#fff" stroke-width="0.6" stroke-opacity="0.8" paint-order="stroke" textLength="18.1" lengthAdjust="spacingAndGlyphs">Vista Park</text><text x="128" y="208.1" font-size="4.5" fill="#188038" font-weight="normal" letter-spacing="0" text-anchor="start" stroke="#fff" stroke-width="0.6" stroke-opacity="0.8" paint-order="stroke" textLength="32.4" lengthAdjust="spacingAndGlyphs">The Panhandle</text><text x="398.4" y="225.5" font-size="4.5" fill="#1a73e8" font-weight="normal" letter-spacing="0" text-anchor="start" stroke="#fff" stroke-width="0.6" stroke-opacity="0.8" paint-order="stroke" textLength="41.3" lengthAdjust="spacingAndGlyphs">Costco Wholesale</text><text x="434.6" y="245" font-size="4.5" fill="#1a73e8" font-weight="normal" letter-spacing="0" text-anchor="start" stroke="#fff" stroke-width="0.6" stroke-opacity="0.8" paint-order="stroke" textLength="22" lengthAdjust="spacingAndGlyphs">Best Buy</text><text x="487" y="201.5" font-size="4.5" fill="#1a73e8" font-weight="normal" letter-spacing="0" text-anchor="start" stroke="#fff" stroke-width="0.6" stroke-opacity="0.8" paint-order="stroke" textLength="7.2" lengthAdjust="spacingAndGlyphs">REI</text><text x="535.5" y="56.5" font-size="4.5" fill="#a94ad6" font-weight="normal" letter-spacing="0" text-anchor="start" stroke="#fff" stroke-width="0.6" stroke-opacity="0.8" paint-order="stroke" textLength="52" lengthAdjust="spacingAndGlyphs">San Francisco Museum</text><text x="535.5" y="62.2" font-size="4.5" fill="#a94ad6" font-weight="normal" letter-spacing="0" text-anchor="start" stroke="#fff" stroke-width="0.6" stroke-opacity="0.8" paint-order="stroke" textLength="30" lengthAdjust="spacingAndGlyphs">of Modern Art</text><text x="538" y="73.8" font-size="4.5" fill="#a94ad6" font-weight="normal" letter-spacing="0" text-anchor="start" stroke="#fff" stroke-width="0.6" stroke-opacity="0.8" paint-order="stroke" textLength="37" lengthAdjust="spacingAndGlyphs">Moscone Center</text><text x="552" y="101" font-size="4.5" fill="#e8710a" font-weight="normal" letter-spacing="0" text-anchor="start" stroke="#fff" stroke-width="0.6" stroke-opacity="0.8" paint-order="stroke" textLength="14" lengthAdjust="spacingAndGlyphs">Garaje</text><text x="549.8" y="161.5" font-size="4.5" fill="#70757a" font-weight="normal" letter-spacing="0" text-anchor="start" stroke="#fff" stroke-width="0.6" stroke-opacity="0.8" paint-order="stroke" textLength="30.2" lengthAdjust="spacingAndGlyphs">San Francisco</text><text x="618.9" y="119.3" font-size="4.5" fill="#188038" font-weight="normal" letter-spacing="0" text-anchor="start" stroke="#fff" stroke-width="0.6" stroke-opacity="0.8" paint-order="stroke" textLength="45.3" lengthAdjust="spacingAndGlyphs">South Beach Harbor</text><text x="659.8" y="137.9" font-size="4.5" fill="#188038" font-weight="normal" letter-spacing="0" text-anchor="start" stroke="#fff" stroke-width="0.6" stroke-opacity="0.8" paint-order="stroke" textLength="56" lengthAdjust="spacingAndGlyphs">South Beach Fishing Pier</text><text x="598.4" y="137.9" font-size="4.5" fill="#188038" font-weight="normal" letter-spacing="0" text-anchor="start" stroke="#fff" stroke-width="0.6" stroke-opacity="0.8" paint-order="stroke" textLength="25.8" lengthAdjust="spacingAndGlyphs">Oracle Park</text><text x="624" y="173.4" font-size="4.5" fill="#a94ad6" font-weight="normal" letter-spacing="0" text-anchor="start" stroke="#fff" stroke-width="0.6" stroke-opacity="0.8" paint-order="stroke" textLength="29.6" lengthAdjust="spacingAndGlyphs">LUMA Hotel</text><text x="624" y="178.9" font-size="4.5" fill="#a94ad6" font-weight="normal" letter-spacing="0" text-anchor="start" stroke="#fff" stroke-width="0.6" stroke-opacity="0.8" paint-order="stroke" textLength="34.6" lengthAdjust="spacingAndGlyphs">San Francisco</text><text x="588" y="208.3" font-size="4.5" fill="#188038" font-weight="normal" letter-spacing="0" text-anchor="start" stroke="#fff" stroke-width="0.6" stroke-opacity="0.8" paint-order="stroke" textLength="27" lengthAdjust="spacingAndGlyphs">Mission Bay</text><text x="592" y="213.8" font-size="4.5" fill="#188038" font-weight="normal" letter-spacing="0" text-anchor="start" stroke="#fff" stroke-width="0.6" stroke-opacity="0.8" paint-order="stroke" textLength="19" lengthAdjust="spacingAndGlyphs">Kids Park</text><text x="662.3" y="216.5" font-size="4.5" fill="#188038" font-weight="normal" letter-spacing="0" text-anchor="start" stroke="#fff" stroke-width="0.6" stroke-opacity="0.8" paint-order="stroke" textLength="43.7" lengthAdjust="spacingAndGlyphs">Bay View Boat Club</text><text x="624" y="237" font-size="4.5" fill="#188038" font-weight="normal" letter-spacing="0" text-anchor="start" stroke="#fff" stroke-width="0.6" stroke-opacity="0.8" paint-order="stroke" textLength="30.5" lengthAdjust="spacingAndGlyphs">Bayfront Park</text><text x="646.6" y="249.3" font-size="4.5" fill="#a94ad6" font-weight="normal" letter-spacing="0" text-anchor="start" stroke="#fff" stroke-width="0.6" stroke-opacity="0.8" paint-order="stroke" textLength="30.4" lengthAdjust="spacingAndGlyphs">Chase Center</text><text x="274" y="54" font-size="4.0" fill="#60656b" font-weight="normal" letter-spacing="0" text-anchor="start" transform="rotate(-9 274 54)">Sutter St</text><text x="226" y="72" font-size="4.0" fill="#60656b" font-weight="normal" letter-spacing="0" text-anchor="start" transform="rotate(-9 226 72)">Post St</text><text x="172" y="91.6" font-size="4.0" fill="#60656b" font-weight="normal" letter-spacing="0" text-anchor="start" transform="rotate(-9 172 91.6)">Geary Blvd</text><text x="306" y="90" font-size="4.0" fill="#60656b" font-weight="normal" letter-spacing="0" text-anchor="start" transform="rotate(-9 306 90)">Ellis St</text><text x="115" y="113" font-size="4.0" fill="#60656b" font-weight="normal" letter-spacing="0" text-anchor="start" transform="rotate(-9 115 113)">Anza St</text><text x="214" y="125.5" font-size="4.0" fill="#60656b" font-weight="normal" letter-spacing="0" text-anchor="start" transform="rotate(-9 214 125.5)">Turk St</text><text x="215.5" y="134.7" font-size="4.0" fill="#60656b" font-weight="normal" letter-spacing="0" text-anchor="start" transform="rotate(-9 215.5 134.7)">Golden Gate Ave</text><text x="157" y="128.6" font-size="4.0" fill="#60656b" font-weight="normal" letter-spacing="0" text-anchor="start" transform="rotate(-9 157 128.6)">Anzavista Ave</text><text x="165" y="133" font-size="4.0" fill="#60656b" font-weight="normal" letter-spacing="0" text-anchor="start" transform="rotate(-9 165 133)">Turk Blvd</text><text x="215.5" y="144" font-size="4.0" fill="#60656b" font-weight="normal" letter-spacing="0" text-anchor="start" transform="rotate(-9 215.5 144)">McAllister St</text><text x="285" y="121.5" font-size="4.0" fill="#60656b" font-weight="normal" letter-spacing="0" text-anchor="start" transform="rotate(-9 285 121.5)">Golden Gate Ave</text><text x="315" y="69" font-size="4.0" fill="#60656b" font-weight="normal" letter-spacing="0" text-anchor="start" transform="rotate(-9 315 69)">Geary Blvd</text><text x="104.5" y="104" font-size="4.0" fill="#60656b" font-weight="normal" letter-spacing="0" text-anchor="start" transform="rotate(-9 104.5 104)">ary Blvd</text><text x="136" y="110" font-size="4.0" fill="#60656b" font-weight="normal" letter-spacing="0" text-anchor="start" transform="rotate(81 136 110)">Masonic Ave</text><text x="166" y="141" font-size="4.0" fill="#60656b" font-weight="normal" letter-spacing="0" text-anchor="start" transform="rotate(81 166 141)">Lyon St</text><text x="181.6" y="144" font-size="4.0" fill="#60656b" font-weight="normal" letter-spacing="0" text-anchor="start" transform="rotate(81 181.6 144)">Baker St</text><text x="197" y="135" font-size="4.0" fill="#60656b" font-weight="normal" letter-spacing="0" text-anchor="start" transform="rotate(81 197 135)">Broderick St</text><text x="204.7" y="91.6" font-size="4.0" fill="#60656b" font-weight="normal" letter-spacing="0" text-anchor="start" transform="rotate(81 204.7 91.6)">Divisadero St</text><text x="217.7" y="87" font-size="4.0" fill="#60656b" font-weight="normal" letter-spacing="0" text-anchor="start" transform="rotate(81 217.7 87)">Scott St</text><text x="246" y="88.5" font-size="4.0" fill="#60656b" font-weight="normal" letter-spacing="0" text-anchor="start" transform="rotate(81 246 88.5)">Steiner St</text><text x="277" y="98" font-size="4.0" fill="#60656b" font-weight="normal" letter-spacing="0" text-anchor="start" transform="rotate(81 277 98)">Webster St</text><text x="302" y="74.7" font-size="4.0" fill="#60656b" font-weight="normal" letter-spacing="0" text-anchor="start" transform="rotate(81 302 74.7)">Laguna St</text><text x="329.5" y="68.5" font-size="4.0" fill="#60656b" font-weight="normal" letter-spacing="0" text-anchor="start" transform="rotate(81 329.5 68.5)">Gough St</text><text x="345" y="68.5" font-size="4.0" fill="#60656b" font-weight="normal" letter-spacing="0" text-anchor="start" transform="rotate(81 345 68.5)">Franklin St</text><text x="225" y="153.8" font-size="4.0" fill="#60656b" font-weight="normal" letter-spacing="0" text-anchor="start" transform="rotate(-9 225 153.8)">Fulton St</text><text x="289.6" y="160" font-size="4.0" fill="#60656b" font-weight="normal" letter-spacing="0" text-anchor="start" transform="rotate(-9 289.6 160)">Ivy St</text><text x="116.8" y="180" font-size="4.0" fill="#60656b" font-weight="normal" letter-spacing="0" text-anchor="start" transform="rotate(81 116.8 180)">Clayton St</text><text x="130.6" y="175" font-size="4.0" fill="#60656b" font-weight="normal" letter-spacing="0" text-anchor="start" transform="rotate(81 130.6 175)">Ashbury St</text><text x="170" y="201" font-size="4.0" fill="#60656b" font-weight="normal" letter-spacing="0" text-anchor="start" transform="rotate(81 170 201)">Lyon St</text><text x="106" y="213.4" font-size="4.0" fill="#60656b" font-weight="normal" letter-spacing="0" text-anchor="start" transform="rotate(-9 106 213.4)">Oak St</text><text x="109" y="219.5" font-size="4.0" fill="#60656b" font-weight="normal" letter-spacing="0" text-anchor="start" transform="rotate(81 109 219.5)">Cole St</text><text x="205.5" y="189" font-size="4.0" fill="#60656b" font-weight="normal" letter-spacing="0" text-anchor="start" transform="rotate(-9 205.5 189)">Fell St</text><text x="234.5" y="195" font-size="4.0" fill="#60656b" font-weight="normal" letter-spacing="0" text-anchor="start" transform="rotate(-9 234.5 195)">Oak St</text><text x="234.5" y="201" font-size="4.0" fill="#60656b" font-weight="normal" letter-spacing="0" text-anchor="start" transform="rotate(81 234.5 201)">Scott St</text><text x="250" y="198" font-size="4.0" fill="#60656b" font-weight="normal" letter-spacing="0" text-anchor="start" transform="rotate(81 250 198)">Pierce St</text><text x="263.6" y="193.5" font-size="4.0" fill="#60656b" font-weight="normal" letter-spacing="0" text-anchor="start" transform="rotate(81 263.6 193.5)">Steiner St</text><text x="277.4" y="189" font-size="4.0" fill="#60656b" font-weight="normal" letter-spacing="0" text-anchor="start" transform="rotate(81 277.4 189)">Fillmore St</text><text x="291" y="189" font-size="4.0" fill="#60656b" font-weight="normal" letter-spacing="0" text-anchor="start" transform="rotate(81 291 189)">Webster St</text><text x="305" y="186" font-size="4.0" fill="#60656b" font-weight="normal" letter-spacing="0" text-anchor="start" transform="rotate(81 305 186)">Buchanan St</text><text x="318.7" y="183" font-size="4.0" fill="#60656b" font-weight="normal" letter-spacing="0" text-anchor="start" transform="rotate(81 318.7 183)">Laguna St</text><text x="334" y="175" font-size="4.0" fill="#60656b" font-weight="normal" letter-spacing="0" text-anchor="start" transform="rotate(81 334 175)">Octavia Blvd</text><text x="280" y="218" font-size="4.0" fill="#60656b" font-weight="normal" letter-spacing="0" text-anchor="start" transform="rotate(-9 280 218)">Waller St</text><text x="268" y="230" font-size="4.0" fill="#60656b" font-weight="normal" letter-spacing="0" text-anchor="start" transform="rotate(-9 268 230)">Hermann St</text><text x="311" y="234" font-size="4.0" fill="#60656b" font-weight="normal" letter-spacing="0" text-anchor="start" transform="rotate(-2 311 234)">Duboce Ave</text><text x="193" y="203" font-size="4.0" fill="#60656b" font-weight="normal" letter-spacing="0" text-anchor="start" transform="rotate(81 193 203)">Baker St</text><text x="207" y="193.5" font-size="4.0" fill="#60656b" font-weight="normal" letter-spacing="0" text-anchor="start" transform="rotate(81 207 193.5)">Broderick St</text><text x="361" y="60.8" font-size="4.0" fill="#60656b" font-weight="normal" letter-spacing="0" text-anchor="start" transform="rotate(-9 361 60.8)">Geary St</text><text x="361" y="70" font-size="4.0" fill="#60656b" font-weight="normal" letter-spacing="0" text-anchor="start" transform="rotate(-9 361 70)">O'Farrell St</text><text x="387" y="76" font-size="4.0" fill="#60656b" font-weight="normal" letter-spacing="0" text-anchor="start" transform="rotate(81 387 76)">Larkin St</text><text x="367" y="101" font-size="4.0" fill="#60656b" font-weight="normal" letter-spacing="0" text-anchor="start" transform="rotate(-9 367 101)">Turk St</text><text x="374.6" y="141" font-size="4.0" fill="#60656b" font-weight="normal" letter-spacing="0" text-anchor="start" transform="rotate(-9 374.6 141)">Grove St</text><text x="470" y="64" font-size="4.0" fill="#60656b" font-weight="normal" letter-spacing="0" text-anchor="start" transform="rotate(-9 470 64)">Ellis St</text><text x="448.6" y="77" font-size="4.0" fill="#60656b" font-weight="normal" letter-spacing="0" text-anchor="start" transform="rotate(-9 448.6 77)">Powell St</text><text x="441" y="88.5" font-size="4.0" fill="#60656b" font-weight="normal" letter-spacing="0" text-anchor="start" transform="rotate(-9 441 88.5)">Turk St</text><text x="394" y="164" font-size="4.0" fill="#60656b" font-weight="normal" letter-spacing="0" text-anchor="start" transform="rotate(-9 394 164)">Fell St</text><text x="376" y="184" font-size="4.0" fill="#60656b" font-weight="normal" letter-spacing="0" text-anchor="start" transform="rotate(-9 376 184)">Oak St</text><text x="413" y="45" font-size="4.0" fill="#60656b" font-weight="normal" letter-spacing="0" text-anchor="start" transform="rotate(81 413 45)">Leavenworth St</text><text x="437" y="112" font-size="4.0" fill="#60656b" font-weight="normal" letter-spacing="0" text-anchor="start" transform="rotate(-50 437 112)">Market St</text><text x="300" y="248" font-size="4.0" fill="#60656b" font-weight="normal" letter-spacing="0" text-anchor="start" transform="rotate(-42 300 248)">Market St</text><text x="450" y="96" font-size="4.0" fill="#60656b" font-weight="normal" letter-spacing="0" text-anchor="start" transform="rotate(52 450 96)">6th St</text><text x="471" y="86" font-size="4.0" fill="#60656b" font-weight="normal" letter-spacing="0" text-anchor="start" transform="rotate(52 471 86)">5th St</text><text x="488" y="98" font-size="4.0" fill="#60656b" font-weight="normal" letter-spacing="0" text-anchor="start" transform="rotate(-48 488 98)">Mint St</text><text x="472" y="117" font-size="4.0" fill="#60656b" font-weight="normal" letter-spacing="0" text-anchor="start" transform="rotate(-48 472 117)">Natoma St</text><text x="484" y="127" font-size="4.0" fill="#60656b" font-weight="normal" letter-spacing="0" text-anchor="start" transform="rotate(-48 484 127)">Tehama St</text><text x="440" y="127" font-size="4.0" fill="#60656b" font-weight="normal" letter-spacing="0" text-anchor="start" transform="rotate(52 440 127)">7th St</text><text x="414" y="141" font-size="4.0" fill="#60656b" font-weight="normal" letter-spacing="0" text-anchor="start" transform="rotate(52 414 141)">8th St</text><text x="514" y="118" font-size="4.0" fill="#60656b" font-weight="normal" letter-spacing="0" text-anchor="start" transform="rotate(-55 514 118)">Shipley St</text><text x="521" y="124" font-size="4.0" fill="#60656b" font-weight="normal" letter-spacing="0" text-anchor="start" transform="rotate(-55 521 124)">Clara St</text><text x="532" y="105" font-size="4.0" fill="#60656b" font-weight="normal" letter-spacing="0" text-anchor="start" transform="rotate(55 532 105)">4th St</text><text x="548" y="84" font-size="4.0" fill="#60656b" font-weight="normal" letter-spacing="0" text-anchor="start" transform="rotate(52 548 84)">3rd St</text><text x="504" y="154" font-size="4.0" fill="#60656b" font-weight="normal" letter-spacing="0" text-anchor="start" transform="rotate(-50 504 154)">Harrison St</text><text x="534" y="147" font-size="4.0" fill="#60656b" font-weight="normal" letter-spacing="0" text-anchor="start" transform="rotate(55 534 147)">5th St</text><text x="573" y="80" font-size="4.0" fill="#60656b" font-weight="normal" letter-spacing="0" text-anchor="start" transform="rotate(-50 573 80)">Harrison St</text><text x="577" y="39" font-size="4.0" fill="#60656b" font-weight="normal" letter-spacing="0" text-anchor="start" transform="rotate(55 577 39)">1st St</text><text x="418" y="156" font-size="4.0" fill="#60656b" font-weight="normal" letter-spacing="0" text-anchor="start" transform="rotate(52 418 156)">11th St</text><text x="392" y="186" font-size="4.0" fill="#60656b" font-weight="normal" letter-spacing="0" text-anchor="start" transform="rotate(-50 392 186)">Mission St</text><text x="395" y="197" font-size="4.0" fill="#60656b" font-weight="normal" letter-spacing="0" text-anchor="start" transform="rotate(-50 395 197)">Minna St</text><text x="397" y="204" font-size="4.0" fill="#60656b" font-weight="normal" letter-spacing="0" text-anchor="start" transform="rotate(-50 397 204)">Natoma St</text><text x="416" y="170" font-size="4.0" fill="#60656b" font-weight="normal" letter-spacing="0" text-anchor="start" transform="rotate(55 416 170)">9th St</text><text x="416" y="194" font-size="4.0" fill="#60656b" font-weight="normal" letter-spacing="0" text-anchor="start" transform="rotate(55 416 194)">10th St</text><text x="388" y="215" font-size="4.0" fill="#60656b" font-weight="normal" letter-spacing="0" text-anchor="start" transform="rotate(-58 388 215)">Howard St</text><text x="440" y="189" font-size="4.0" fill="#60656b" font-weight="normal" letter-spacing="0" text-anchor="start" transform="rotate(-55 440 189)">Folsom St</text><text x="468" y="194" font-size="4.0" fill="#60656b" font-weight="normal" letter-spacing="0" text-anchor="start" transform="rotate(55 468 194)">8th St</text><text x="467" y="219" font-size="4.0" fill="#60656b" font-weight="normal" letter-spacing="0" text-anchor="start" transform="rotate(55 467 219)">9th St</text><text x="444" y="215" font-size="4.0" fill="#60656b" font-weight="normal" letter-spacing="0" text-anchor="start" transform="rotate(-55 444 215)">Harrison St</text><text x="454" y="229" font-size="4.0" fill="#60656b" font-weight="normal" letter-spacing="0" text-anchor="start" transform="rotate(-50 454 229)">Bryant St</text><text x="366" y="234" font-size="4.0" fill="#60656b" font-weight="normal" letter-spacing="0" text-anchor="start" transform="rotate(81 366 234)">Mission St</text><text x="404" y="246" font-size="4.0" fill="#60656b" font-weight="normal" letter-spacing="0" text-anchor="start" transform="rotate(81 404 246)">Folsom St</text><text x="451" y="252" font-size="4.0" fill="#60656b" font-weight="normal" letter-spacing="0" text-anchor="start" transform="rotate(-3 451 252)">Alameda St</text><text x="493" y="180" font-size="4.0" fill="#60656b" font-weight="normal" letter-spacing="0" text-anchor="start" transform="rotate(55 493 180)">7th St</text><text x="519" y="167" font-size="4.0" fill="#60656b" font-weight="normal" letter-spacing="0" text-anchor="start" transform="rotate(55 519 167)">6th St</text><text x="537" y="185" font-size="4.0" fill="#60656b" font-weight="normal" letter-spacing="0" text-anchor="start" transform="rotate(-50 537 185)">Bluxome St</text><text x="539" y="148" font-size="4.0" fill="#60656b" font-weight="normal" letter-spacing="0" text-anchor="start" transform="rotate(55 539 148)">5th St</text><text x="567" y="190" font-size="4.0" fill="#60656b" font-weight="normal" letter-spacing="0" text-anchor="start" transform="rotate(-50 567 190)">King St</text><text x="561" y="207" font-size="4.0" fill="#60656b" font-weight="normal" letter-spacing="0" text-anchor="start" transform="rotate(-50 561 207)">Berry St</text><text x="594" y="168" font-size="4.0" fill="#60656b" font-weight="normal" letter-spacing="0" text-anchor="start" transform="rotate(55 594 168)">4th St</text><text x="574" y="241" font-size="4.0" fill="#60656b" font-weight="normal" letter-spacing="0" text-anchor="start" transform="rotate(55 574 241)">Owens St</text><text x="572" y="198" font-size="4.0" fill="#60656b" font-weight="normal" letter-spacing="0" text-anchor="start" transform="rotate(-50 572 198)">Berry St</text><text x="593" y="203" font-size="4.0" fill="#60656b" font-weight="normal" letter-spacing="0" text-anchor="start" transform="rotate(-50 593 203)">Channel St</text><text x="583" y="112" font-size="4.0" fill="#60656b" font-weight="normal" letter-spacing="0" text-anchor="start" transform="rotate(-50 583 112)">Townsend St</text><text x="586" y="130" font-size="4.0" fill="#60656b" font-weight="normal" letter-spacing="0" text-anchor="start" transform="rotate(55 586 130)">Ritch St</text><text x="607" y="146" font-size="4.0" fill="#60656b" font-weight="normal" letter-spacing="0" text-anchor="start" transform="rotate(55 607 146)">3rd St</text><text x="600" y="168" font-size="4.0" fill="#60656b" font-weight="normal" letter-spacing="0" text-anchor="start" transform="rotate(-50 600 168)">Berry St</text><text x="560" y="60" font-size="4.0" fill="#60656b" font-weight="normal" letter-spacing="0" text-anchor="start" transform="rotate(-48 560 60)">Natoma St</text><text x="598" y="106" font-size="4.0" fill="#60656b" font-weight="normal" letter-spacing="0" text-anchor="start" transform="rotate(55 598 106)">2nd St</text><text x="345" y="246" font-size="4.0" fill="#60656b" font-weight="normal" letter-spacing="0" text-anchor="start" transform="rotate(81 345 246)">Valencia St</text><text x="354" y="240" font-size="4.0" fill="#60656b" font-weight="normal" letter-spacing="0" text-anchor="start" transform="rotate(81 354 240)">Guerrero St</text><text x="365" y="232.5" font-size="4.0" fill="#60656b" font-weight="normal" letter-spacing="0" text-anchor="start" transform="rotate(-2 365 232.5)">13th St</text><text x="409.5" y="248" font-size="4.0" fill="#60656b" font-weight="normal" letter-spacing="0" text-anchor="start" transform="rotate(-2 409.5 248)">14th St</text><path d="M244.79999999999998 80.1 L246.6 82.2 L248.4 80.1Z" fill="#fff"/><circle cx="246.6" cy="77.3" r="3.5" fill="#f4822c" stroke="#fff" stroke-width="0.6"/><path d="M245.6 78.2V76.89999999999999L246.6 76.2L247.6 76.89999999999999V78.2Z" fill="#fff" opacity="0.75"/><path d="M324.0 158.8 L325.8 160.9 L327.6 158.8Z" fill="#fff"/><circle cx="325.8" cy="156" r="3.5" fill="#f4822c" stroke="#fff" stroke-width="0.6"/><path d="M324.8 156.9V155.6L325.8 154.9L326.8 155.6V156.9Z" fill="#fff" opacity="0.75"/><path d="M343.5 165.8 L345.3 167.9 L347.1 165.8Z" fill="#fff"/><circle cx="345.3" cy="163" r="3.5" fill="#f4822c" stroke="#fff" stroke-width="0.6"/><path d="M344.3 163.9V162.6L345.3 161.9L346.3 162.6V163.9Z" fill="#fff" opacity="0.75"/><path d="M352.2 190.5 L354 192.6 L355.8 190.5Z" fill="#fff"/><circle cx="354" cy="187.7" r="3.5" fill="#f4822c" stroke="#fff" stroke-width="0.6"/><path d="M353.0 188.6V187.29999999999998L354 186.6L355.0 187.29999999999998V188.6Z" fill="#fff" opacity="0.75"/><path d="M476.9 147.20000000000002 L478.7 149.3 L480.5 147.20000000000002Z" fill="#fff"/><circle cx="478.7" cy="144.4" r="3.5" fill="#f4822c" stroke="#fff" stroke-width="0.6"/><path d="M477.7 145.3V144.0L478.7 143.3L479.7 144.0V145.3Z" fill="#fff" opacity="0.75"/><path d="M564.0 139.20000000000002 L565.8 141.3 L567.5999999999999 139.20000000000002Z" fill="#fff"/><circle cx="565.8" cy="136.4" r="3.5" fill="#f4822c" stroke="#fff" stroke-width="0.6"/><path d="M564.8 137.3V136.0L565.8 135.3L566.8 136.0V137.3Z" fill="#fff" opacity="0.75"/><path d="M569.8000000000001 102.0 L571.6 104.10000000000001 L573.4 102.0Z" fill="#fff"/><circle cx="571.6" cy="99.2" r="3.5" fill="#f4822c" stroke="#fff" stroke-width="0.6"/><path d="M570.6 100.10000000000001V98.8L571.6 98.10000000000001L572.6 98.8V100.10000000000001Z" fill="#fff" opacity="0.75"/><path d="M600.9000000000001 94.2 L602.7 96.30000000000001 L604.5 94.2Z" fill="#fff"/><circle cx="602.7" cy="91.4" r="3.5" fill="#f4822c" stroke="#fff" stroke-width="0.6"/><path d="M601.7 92.30000000000001V91.0L602.7 90.30000000000001L603.7 91.0V92.30000000000001Z" fill="#fff" opacity="0.75"/><path d="M129.6 85.1 L131.4 87.2 L133.20000000000002 85.1Z" fill="#fff"/><circle cx="131.4" cy="82.3" r="3.5" fill="#1a73e8" stroke="#fff" stroke-width="0.6"/><path d="M130.4 83.2V81.89999999999999L131.4 81.2L132.4 81.89999999999999V83.2Z" fill="#fff" opacity="0.75"/><path d="M139.5 100.8 L141.3 102.9 L143.10000000000002 100.8Z" fill="#fff"/><circle cx="141.3" cy="98" r="3.5" fill="#1a73e8" stroke="#fff" stroke-width="0.6"/><path d="M140.3 98.9V97.6L141.3 96.9L142.3 97.6V98.9Z" fill="#fff" opacity="0.75"/><path d="M147.5 163.20000000000002 L149.3 165.3 L151.10000000000002 163.20000000000002Z" fill="#fff"/><circle cx="149.3" cy="160.4" r="3.5" fill="#1a73e8" stroke="#fff" stroke-width="0.6"/><path d="M148.3 161.3V160.0L149.3 159.3L150.3 160.0V161.3Z" fill="#fff" opacity="0.75"/><path d="M310.59999999999997 141.8 L312.4 143.9 L314.2 141.8Z" fill="#fff"/><circle cx="312.4" cy="139" r="3.5" fill="#1a73e8" stroke="#fff" stroke-width="0.6"/><path d="M311.4 139.9V138.6L312.4 137.9L313.4 138.6V139.9Z" fill="#fff" opacity="0.75"/><path d="M132.0 226.8 L133.8 228.9 L135.60000000000002 226.8Z" fill="#fff"/><circle cx="133.8" cy="224" r="3.5" fill="#1a73e8" stroke="#fff" stroke-width="0.6"/><path d="M132.8 224.9V223.6L133.8 222.9L134.8 223.6V224.9Z" fill="#fff" opacity="0.75"/><path d="M442.9 226.20000000000002 L444.7 228.3 L446.5 226.20000000000002Z" fill="#fff"/><circle cx="444.7" cy="223.4" r="3.5" fill="#1a73e8" stroke="#fff" stroke-width="0.6"/><path d="M443.7 224.3V223.0L444.7 222.3L445.7 223.0V224.3Z" fill="#fff" opacity="0.75"/><path d="M426.8 245.3 L428.6 247.4 L430.40000000000003 245.3Z" fill="#fff"/><circle cx="428.6" cy="242.5" r="3.5" fill="#1a73e8" stroke="#fff" stroke-width="0.6"/><path d="M427.6 243.4V242.1L428.6 241.4L429.6 242.1V243.4Z" fill="#fff" opacity="0.75"/><path d="M498.09999999999997 202.60000000000002 L499.9 204.70000000000002 L501.7 202.60000000000002Z" fill="#fff"/><circle cx="499.9" cy="199.8" r="3.5" fill="#1a73e8" stroke="#fff" stroke-width="0.6"/><path d="M498.9 200.70000000000002V199.4L499.9 198.70000000000002L500.9 199.4V200.70000000000002Z" fill="#fff" opacity="0.75"/><path d="M450.59999999999997 59.8 L452.4 61.9 L454.2 59.8Z" fill="#fff"/><circle cx="452.4" cy="57" r="3.5" fill="#b04fd8" stroke="#fff" stroke-width="0.6"/><path d="M451.4 57.9V56.6L452.4 55.9L453.4 56.6V57.9Z" fill="#fff" opacity="0.75"/><path d="M399.2 118.8 L401 120.9 L402.8 118.8Z" fill="#fff"/><circle cx="401" cy="116" r="3.5" fill="#b04fd8" stroke="#fff" stroke-width="0.6"/><path d="M400.0 116.9V115.6L401 114.9L402.0 115.6V116.9Z" fill="#fff" opacity="0.75"/><path d="M258.2 161.5 L260 163.6 L261.8 161.5Z" fill="#fff"/><circle cx="260" cy="158.7" r="3.5" fill="#b04fd8" stroke="#fff" stroke-width="0.6"/><path d="M259.0 159.6V158.29999999999998L260 157.6L261.0 158.29999999999998V159.6Z" fill="#fff" opacity="0.75"/><path d="M527.6 59.4 L529.4 61.5 L531.1999999999999 59.4Z" fill="#fff"/><circle cx="529.4" cy="56.6" r="3.5" fill="#b04fd8" stroke="#fff" stroke-width="0.6"/><path d="M528.4 57.5V56.2L529.4 55.5L530.4 56.2V57.5Z" fill="#fff" opacity="0.75"/><path d="M529.9000000000001 74.0 L531.7 76.10000000000001 L533.5 74.0Z" fill="#fff"/><circle cx="531.7" cy="71.2" r="3.5" fill="#b04fd8" stroke="#fff" stroke-width="0.6"/><path d="M530.7 72.10000000000001V70.8L531.7 70.10000000000001L532.7 70.8V72.10000000000001Z" fill="#fff" opacity="0.75"/><path d="M639.8000000000001 249.5 L641.6 251.6 L643.4 249.5Z" fill="#fff"/><circle cx="641.6" cy="246.7" r="3.5" fill="#b04fd8" stroke="#fff" stroke-width="0.6"/><path d="M640.6 247.6V246.29999999999998L641.6 245.6L642.6 246.29999999999998V247.6Z" fill="#fff" opacity="0.75"/><path d="M617.2 178.10000000000002 L619 180.20000000000002 L620.8 178.10000000000002Z" fill="#fff"/><circle cx="619" cy="175.3" r="3.5" fill="#b04fd8" stroke="#fff" stroke-width="0.6"/><path d="M618.0 176.20000000000002V174.9L619 174.20000000000002L620.0 174.9V176.20000000000002Z" fill="#fff" opacity="0.75"/><path d="M529.9000000000001 89.6 L531.7 91.7 L533.5 89.6Z" fill="#fff"/><circle cx="531.7" cy="86.8" r="3.5" fill="#1e8e3e" stroke="#fff" stroke-width="0.6"/><path d="M530.7 87.7V86.39999999999999L531.7 85.7L532.7 86.39999999999999V87.7Z" fill="#fff" opacity="0.75"/><path d="M274.7 176.60000000000002 L276.5 178.70000000000002 L278.3 176.60000000000002Z" fill="#fff"/><circle cx="276.5" cy="173.8" r="3.5" fill="#1e8e3e" stroke="#fff" stroke-width="0.6"/><path d="M275.5 174.70000000000002V173.4L276.5 172.70000000000002L277.5 173.4V174.70000000000002Z" fill="#fff" opacity="0.75"/><path d="M667.8000000000001 119.7 L669.6 121.80000000000001 L671.4 119.7Z" fill="#fff"/><circle cx="669.6" cy="116.9" r="3.5" fill="#1e8e3e" stroke="#fff" stroke-width="0.6"/><path d="M668.6 117.80000000000001V116.5L669.6 115.80000000000001L670.6 116.5V117.80000000000001Z" fill="#fff" opacity="0.75"/><path d="M652.6 138.4 L654.4 140.5 L656.1999999999999 138.4Z" fill="#fff"/><circle cx="654.4" cy="135.6" r="3.5" fill="#1e8e3e" stroke="#fff" stroke-width="0.6"/><path d="M653.4 136.5V135.2L654.4 134.5L655.4 135.2V136.5Z" fill="#fff" opacity="0.75"/><path d="M628.6 138.4 L630.4 140.5 L632.1999999999999 138.4Z" fill="#fff"/><circle cx="630.4" cy="135.6" r="3.5" fill="#1e8e3e" stroke="#fff" stroke-width="0.6"/><path d="M629.4 136.5V135.2L630.4 134.5L631.4 135.2V136.5Z" fill="#fff" opacity="0.75"/><path d="M654.1 218.0 L655.9 220.1 L657.6999999999999 218.0Z" fill="#fff"/><circle cx="655.9" cy="215.2" r="3.5" fill="#1e8e3e" stroke="#fff" stroke-width="0.6"/><path d="M654.9 216.1V214.79999999999998L655.9 214.1L656.9 214.79999999999998V216.1Z" fill="#fff" opacity="0.75"/><path d="M658.2 237.10000000000002 L660 239.20000000000002 L661.8 237.10000000000002Z" fill="#fff"/><circle cx="660" cy="234.3" r="3.5" fill="#1e8e3e" stroke="#fff" stroke-width="0.6"/><path d="M659.0 235.20000000000002V233.9L660 233.20000000000002L661.0 233.9V235.20000000000002Z" fill="#fff" opacity="0.75"/><path d="M235.6 45.3 L237.4 47.4 L239.20000000000002 45.3Z" fill="#fff"/><circle cx="237.4" cy="42.5" r="3.0" fill="#70757a" stroke="#fff" stroke-width="0.6"/><path d="M236.4 43.4V42.1L237.4 41.4L238.4 42.1V43.4Z" fill="#fff" opacity="0.75"/><path d="M283.8 65.2 L285.6 67.3 L287.40000000000003 65.2Z" fill="#fff"/><circle cx="285.6" cy="62.4" r="3.0" fill="#70757a" stroke="#fff" stroke-width="0.6"/><path d="M284.6 63.3V62.0L285.6 61.3L286.6 62.0V63.3Z" fill="#fff" opacity="0.75"/><path d="M372.9 129.5 L374.7 131.6 L376.5 129.5Z" fill="#fff"/><circle cx="374.7" cy="126.7" r="3.0" fill="#70757a" stroke="#fff" stroke-width="0.6"/><path d="M373.7 127.60000000000001V126.3L374.7 125.60000000000001L375.7 126.3V127.60000000000001Z" fill="#fff" opacity="0.75"/><path d="M105.4 158.8 L107.2 160.9 L109.0 158.8Z" fill="#fff"/><circle cx="107.2" cy="156" r="3.0" fill="#70757a" stroke="#fff" stroke-width="0.6"/><path d="M106.2 156.9V155.6L107.2 154.9L108.2 155.6V156.9Z" fill="#fff" opacity="0.75"/><path d="M192.79999999999998 192.8 L194.6 194.9 L196.4 192.8Z" fill="#fff"/><circle cx="194.6" cy="190" r="3.0" fill="#70757a" stroke="#fff" stroke-width="0.6"/><path d="M193.6 190.9V189.6L194.6 188.9L195.6 189.6V190.9Z" fill="#fff" opacity="0.75"/><path d="M580.6 162.4 L582.4 164.5 L584.1999999999999 162.4Z" fill="#fff"/><circle cx="582.4" cy="159.6" r="3.0" fill="#70757a" stroke="#fff" stroke-width="0.6"/><path d="M581.4 160.5V159.2L582.4 158.5L583.4 159.2V160.5Z" fill="#fff" opacity="0.75"/><circle cx="506.8" cy="44.5" r="2.5" fill="#5f6368" stroke="#fff" stroke-width="0.5"/><rect x="506.05" y="43.6" width="1.5" height="1.6" rx="0.4" fill="#fff" opacity="0.7"/><circle cx="489.5" cy="60.7" r="2.5" fill="#5f6368" stroke="#fff" stroke-width="0.5"/><rect x="488.75" y="59.800000000000004" width="1.5" height="1.6" rx="0.4" fill="#fff" opacity="0.7"/><circle cx="478" cy="74" r="2.5" fill="#5f6368" stroke="#fff" stroke-width="0.5"/><rect x="477.25" y="73.1" width="1.5" height="1.6" rx="0.4" fill="#fff" opacity="0.7"/><circle cx="467.5" cy="83" r="2.5" fill="#5f6368" stroke="#fff" stroke-width="0.5"/><rect x="466.75" y="82.1" width="1.5" height="1.6" rx="0.4" fill="#fff" opacity="0.7"/><circle cx="523.6" cy="98.6" r="2.5" fill="#5f6368" stroke="#fff" stroke-width="0.5"/><rect x="522.85" y="97.69999999999999" width="1.5" height="1.6" rx="0.4" fill="#fff" opacity="0.7"/><circle cx="410" cy="138" r="2.5" fill="#5f6368" stroke="#fff" stroke-width="0.5"/><rect x="409.25" y="137.1" width="1.5" height="1.6" rx="0.4" fill="#fff" opacity="0.7"/><circle cx="401.3" cy="148" r="2.5" fill="#5f6368" stroke="#fff" stroke-width="0.5"/><rect x="400.55" y="147.1" width="1.5" height="1.6" rx="0.4" fill="#fff" opacity="0.7"/><circle cx="252.6" cy="238.5" r="2.5" fill="#5f6368" stroke="#fff" stroke-width="0.5"/><rect x="251.85" y="237.6" width="1.5" height="1.6" rx="0.4" fill="#fff" opacity="0.7"/><circle cx="286.8" cy="237.8" r="2.5" fill="#5f6368" stroke="#fff" stroke-width="0.5"/><rect x="286.05" y="236.9" width="1.5" height="1.6" rx="0.4" fill="#fff" opacity="0.7"/><circle cx="328.7" cy="220.3" r="2.5" fill="#5f6368" stroke="#fff" stroke-width="0.5"/><rect x="327.95" y="219.4" width="1.5" height="1.6" rx="0.4" fill="#fff" opacity="0.7"/><circle cx="290.5" cy="252.5" r="2.5" fill="#5f6368" stroke="#fff" stroke-width="0.5"/><rect x="289.75" y="251.6" width="1.5" height="1.6" rx="0.4" fill="#fff" opacity="0.7"/><circle cx="374.6" cy="175" r="2.5" fill="#5f6368" stroke="#fff" stroke-width="0.5"/><rect x="373.85" y="174.1" width="1.5" height="1.6" rx="0.4" fill="#fff" opacity="0.7"/><circle cx="349" cy="201.2" r="2.5" fill="#5f6368" stroke="#fff" stroke-width="0.5"/><rect x="348.25" y="200.29999999999998" width="1.5" height="1.6" rx="0.4" fill="#fff" opacity="0.7"/><circle cx="643.8" cy="103.6" r="2.5" fill="#5f6368" stroke="#fff" stroke-width="0.5"/><rect x="643.05" y="102.69999999999999" width="1.5" height="1.6" rx="0.4" fill="#fff" opacity="0.7"/><circle cx="591.3" cy="165.8" r="2.5" fill="#5f6368" stroke="#fff" stroke-width="0.5"/><rect x="590.55" y="164.9" width="1.5" height="1.6" rx="0.4" fill="#fff" opacity="0.7"/><circle cx="625.9" cy="205" r="2.5" fill="#5f6368" stroke="#fff" stroke-width="0.5"/><rect x="625.15" y="204.1" width="1.5" height="1.6" rx="0.4" fill="#fff" opacity="0.7"/><circle cx="629" cy="247.4" r="2.5" fill="#5f6368" stroke="#fff" stroke-width="0.5"/><rect x="628.25" y="246.5" width="1.5" height="1.6" rx="0.4" fill="#fff" opacity="0.7"/><circle cx="540" cy="100" r="2.5" fill="#5f6368" stroke="#fff" stroke-width="0.5"/><rect x="539.25" y="99.1" width="1.5" height="1.6" rx="0.4" fill="#fff" opacity="0.7"/><circle cx="600" cy="120" r="2.5" fill="#5f6368" stroke="#fff" stroke-width="0.5"/><rect x="599.25" y="119.1" width="1.5" height="1.6" rx="0.4" fill="#fff" opacity="0.7"/><circle cx="380" cy="112" r="2.5" fill="#5f6368" stroke="#fff" stroke-width="0.5"/><rect x="379.25" y="111.1" width="1.5" height="1.6" rx="0.4" fill="#fff" opacity="0.7"/><path d="M462.5 145.6 C461.2 142.5 458 140.6 458 137.3 A4.5 4.5 0 0 1 467 137.3 C467 140.6 463.8 142.5 462.5 145.6Z" fill="#ea4335" stroke="#b31412" stroke-width="0.4"/><circle cx="462.5" cy="137.4" r="0.9" fill="#3c0a0a"/><g fill="rgb(100,190,130)" fill-opacity="0.14" fill-rule="evenodd"><path d="M636 175H650V193Q656 189 668 189Q696 190 696 212Q696 234 668 234Q656 234 650 229V234H636Z M667 201Q653 201 653 211.5Q653 222 667 222Q682 222 682 211.5Q682 201 667 201Z"/><path d="M703 175H725V184H703Z M703 188H725V234H703Z"/><path d="M770 175H784V234H770V229Q764 234 752 234Q732 234 732 212Q732 190 752 189Q764 189 770 193Z M755 201Q745 201 745 211.5Q745 222 755 222Q766 222 766 211.5Q766 201 755 201Z"/></g></svg>
<div class="abs" style="left:3.6px;top:5px;width:110px;height:36.2px;background:#fff;border-radius:1px;box-shadow:0 0.5px 1.5px rgba(0,0,0,0.25);"></div>
<div class="abs" style="left:8.3px;top:8.2px;font-size:5.0px;font-weight:bold;color:#202124;white-space:nowrap;">1095 Howard St</div>
<div class="abs" style="left:8.3px;top:16.8px;font-size:4.25px;color:#5f6368;white-space:nowrap;line-height:5.3px;">1095 Howard St, San Francisco, CA<br>94103, USA</div>
<div class="abs" style="left:8.3px;top:32.9px;font-size:4.35px;color:#1a73e8;white-space:nowrap;">View larger map</div>
<svg class="abs" style="left:93px;top:9px" width="8" height="8" viewBox="0 0 8 8"><path d="M4 7.5V4.2L1.6 1.6M4 4.2L6.4 1.6M0.9 2.6V0.9H2.6M5.4 0.9H7.1V2.6" stroke="#1a73e8" stroke-width="1" fill="none"/></svg>
<div class="abs" style="left:87px;top:18px;font-size:4.4px;color:#1a73e8;white-space:nowrap;">Directions</div>
<div class="abs" style="left:4px;top:200.5px;width:14px;height:14px;background:repeating-linear-gradient(45deg,#7d8288 0 1.2px,#a3a8ad 1.2px 2.4px);border-radius:1px;border:0.5px solid #fff;box-sizing:border-box;"></div>
<div class="abs" style="left:699px;top:181.3px;width:14.4px;height:29.3px;background:#fff;border-radius:1px;box-shadow:0 0.5px 1px rgba(0,0,0,0.2);"></div>
<div class="abs" style="left:701px;top:196px;width:10.4px;height:0.5px;background:#e0e0e0;"></div>
<div class="abs" style="left:702.7px;top:188.2px;width:7px;height:0.9px;background:#666;"></div>
<div class="abs" style="left:705.75px;top:185.2px;width:0.9px;height:7px;background:#666;"></div>
<div class="abs" style="left:702.7px;top:203.2px;width:7px;height:0.9px;background:#666;"></div>
<div class="abs" style="left:587px;top:213.8px;width:130px;height:6.2px;background:rgba(245,245,245,0.8);"></div>
<div class="abs" style="left:590px;top:214.6px;font-size:3.45px;color:#444;white-space:nowrap;word-spacing:0.3px;">Keyboard shortcuts &nbsp;&nbsp; Map data ©2025 Google &nbsp;&nbsp; Terms &nbsp;&nbsp; Report a map error</div>
</div>

<div class="h big" style="left:104px;top:273px;font-size:18.6px;font-weight:normal;">Contact Info</div>
<div class="t" style="left:104px;top:301.5px;">Thank you for your kind trust in Nika! With 20 years of experience, our expert team will contact you soonest for the best advise.</div>

<div class="h" style="left:104px;top:325px;font-size:8px;">San Francisco</div>
<div class="t" style="left:115.6px;top:344px;">1095 Howard Street, San Francisco, USA</div>
<div class="t" style="left:115.6px;top:354px;">+(123) 456-789-0123</div>
<div class="t" style="left:115.6px;top:364px;">support@templaza.com</div>
<div class="h" style="left:104px;top:387px;font-size:8px;">Paris</div>
<div class="t" style="left:115.6px;top:405.5px;">1000 Effel Orlando Street, OL 445</div>
<div class="t" style="left:115.6px;top:415px;">+(123) 777-802-2190</div>

<div class="h" style="left:283.6px;top:325px;font-size:8px;">New York</div>
<div class="t" style="left:295px;top:344px;">3497 Watson Street Camden, NJ 08102</div>
<div class="t" style="left:295px;top:354px;">+(123) 456-760-9090</div>
<div class="t" style="left:295px;top:364px;">info@templaza.com</div>
<div class="h" style="left:283.6px;top:387px;font-size:8px;">Berlin</div>
<div class="t" style="left:295px;top:405.5px;">3497 Edward Street, NB 4390</div>
<div class="t" style="left:295px;top:415px;">+(123) 870-510-0225</div>

<div class="h big" style="left:471.8px;top:273px;font-size:17.9px;font-weight:normal;">Get In Touch</div>
<div class="inp" style="top:302.5px;height:13.3px;"><div class="ph" style="top:2.4px">Enter your name...</div></div>
<div class="inp" style="top:325.3px;height:13.2px;"><div class="ph" style="top:2.4px">Enter your email...</div></div>
<div class="inp" style="top:347.8px;height:48.5px;"><div class="ph" style="top:2.6px">Fill out your requirements ...</div><svg style="position:absolute;right:0.8px;bottom:0.8px" width="4" height="4" viewBox="0 0 4 4"><path d="M3.6 0.6L0.6 3.6M3.6 2.2L2.2 3.6" stroke="#777" stroke-width="0.5"/></svg></div>
<div class="t" style="left:471.5px;top:400px;">81 + 17 = ?</div>
<div class="inp" style="top:408.8px;height:20px;"><div class="ph" style="top:3px;color:#ddd">81 + 17 = ?</div></div>

<div id="sb"></div>
<div class="abs" style="left:845.7px;top:6px;width:3.4px;height:342.5px;background:#9c9c9c;border-radius:1.7px;"></div>
<svg class="abs" style="left:844px;top:0" width="6" height="422" viewBox="0 0 6 422"><path d="M3.4 1.6L5 3.8H1.8Z" fill="#bbb"/><path d="M3.4 419.6L5 417.4H1.8Z" fill="#bbb"/></svg>
<svg class="abs" style="left:811px;top:293px" width="16" height="17" viewBox="0 0 16 17"><path d="M8 2.6A6 6 0 1 1 3.2 12.2L2 15L2.6 11.4A6 6 0 0 1 8 2.6Z" fill="#fafafa"/><rect x="5.2" y="5.8" width="5.4" height="6" rx="0.8" fill="#35a37a"/><rect x="6" y="7.6" width="3.8" height="0.8" fill="#e8fff4"/><rect x="6" y="9.4" width="3.8" height="0.8" fill="#e8fff4"/></svg>
<svg class="abs" style="left:100px;top:340px" width="200" height="82" viewBox="100 340 200 82"><g fill="#cfcfcf"><circle cx="110.7" cy="347.9" r="0.85"/><circle cx="110.7" cy="358" r="0.85"/><circle cx="110.7" cy="368" r="0.85"/><circle cx="110.7" cy="409.6" r="0.85"/><circle cx="110.7" cy="419.2" r="0.85"/><circle cx="289.5" cy="347.9" r="0.85"/><circle cx="289.5" cy="358" r="0.85"/><circle cx="289.5" cy="368" r="0.85"/><circle cx="289.5" cy="409.6" r="0.85"/><circle cx="289.5" cy="419.2" r="0.85"/></g></svg>

</body></html>
